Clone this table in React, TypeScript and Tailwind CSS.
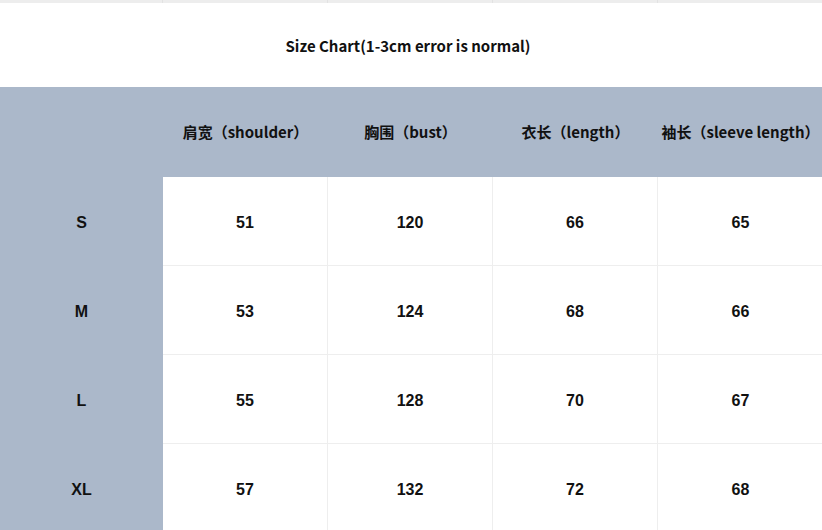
import React from "react";

const headers = ["肩宽（shoulder）", "胸围（bust）", "衣长（length）", "袖长（sleeve length）"];
const rows: [string, string[]][] = [
  ["S", ["51", "120", "66", "65"]],
  ["M", ["53", "124", "68", "66"]],
  ["L", ["55", "128", "70", "67"]],
  ["XL", ["57", "132", "72", "68"]],
];

const cjk = { fontFamily: '"Noto Sans CJK SC", "Noto Sans", sans-serif' };
const arial = { fontFamily: '"Liberation Sans", Arial, sans-serif' };

export default function App() {
  return (
    <div className="w-[822px] h-[530px] overflow-hidden bg-white text-[#111]" style={cjk}>
      <div className="h-[3px] bg-[#ededed] grid grid-cols-[163px_165px_165px_165px_165px]">
        <div className="border-r border-[#e2e2e2]" />
        <div className="border-r border-[#e2e2e2]" />
        <div className="border-r border-[#e2e2e2]" />
        <div className="border-r border-[#e2e2e2]" />
        <div />
      </div>
      <div className="h-[84px] flex items-center justify-center pt-[2px] pr-[6px] text-[15px] font-semibold">
        Size Chart(1-3cm error is normal)
      </div>
      <div className="grid grid-cols-[163px_165px_165px_165px_165px] w-[823px]">
        <div className="h-[90px] bg-[#abb8ca]" />
        {headers.map((h) => (
          <div key={h} className="h-[90px] bg-[#abb8ca] flex items-center justify-center text-[15px] font-semibold whitespace-nowrap pt-[1px]">
            {h}
          </div>
        ))}
        {rows.map(([size, vals], ri) => (
          <React.Fragment key={size}>
            <div className="h-[89px] bg-[#abb8ca] flex items-center justify-center pt-[3px] text-[16px] font-bold" style={arial}>
              {size}
            </div>
            {vals.map((v, ci) => (
              <div
                key={ci}
                style={arial}
                className={
                  "h-[89px] flex items-center justify-center pt-[3px] text-[16px] font-bold border-[#eeeeee] " +
                  (ci < 3 ? "border-r " : "") +
                  (ri < 3 ? "border-b" : "")
                }
              >
                {v}
              </div>
            ))}
          </React.Fragment>
        ))}
      </div>
    </div>
  );
}
